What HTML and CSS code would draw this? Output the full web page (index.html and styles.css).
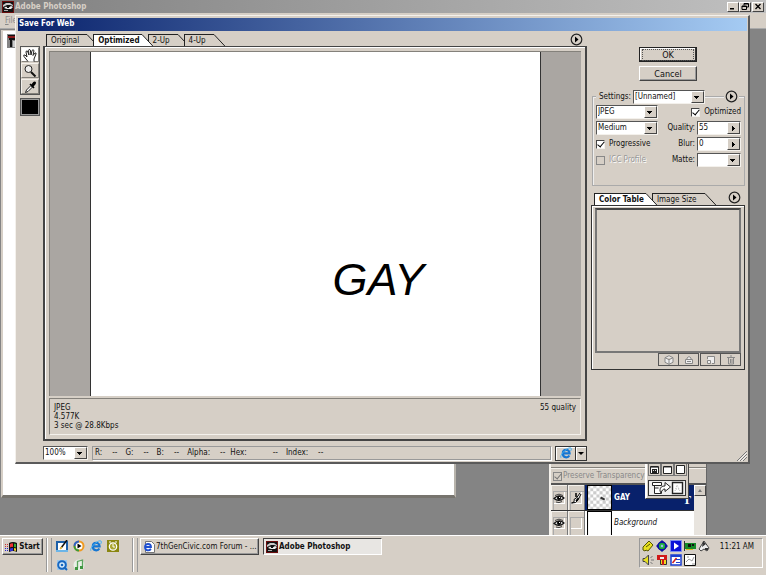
FILE: index.html
```html
<!DOCTYPE html>
<html lang="en">
<head>
<meta charset="utf-8">
<title>Adobe Photoshop</title>
<link rel="stylesheet" href="styles.css">
</head>
<body>
<svg class="defs" aria-hidden="true">
  <symbol id="ps" viewBox="0 0 12 12"><path fill="#6b0d0d" d="M0 0h12v12H0z"/><path fill="#111" d="M1 1h10v10H1z"/><path fill="#c9c9c9" d="M1 4l3-2 4 0 3 2v1L8 4H5L1 6z"/><path fill="#eee" d="M2 7l2-1.500 2 1.500 3-2 2 1-2 2H5z"/><path fill="#aaa" d="M2 9h4v1H2z"/><path fill="#111" d="M5 5.500h2v1.500H5z"/></symbol>
  <symbol id="ie" viewBox="0 0 12 12"><path fill="none" stroke="#1676d2" stroke-width="2.200" d="M2.800 6.400h6.800C9.600 1.600 2.800 1.900 2.800 6.500c0 4.300 4.900 4.800 6.500 2"/><path fill="none" stroke="#48b2f4" d="M1 10.800C-1 9 6 1 10 .8c2 0 1.500 2 .6 3.200"/></symbol>
  <symbol id="menu" viewBox="0 0 13 13"><circle cx="6.500" cy="6.500" r="5.300" fill="#d6cfc6" stroke="#222" stroke-width="1.200"/><path d="M5 3.500v6l3.500-3z"/></symbol>
  <symbol id="slant" viewBox="0 0 11 12"><path class="slant-fill" d="M0 .5l11 11.500H0z"/><path fill="none" stroke="#222" d="M0 .5l10.800 11.500"/></symbol>
  <symbol id="eye" viewBox="0 0 12 12"><path fill="#ddd" stroke="#111" stroke-width="1.200" d="M1 6.500Q6 1.500 11 6Q6 10.500 1 6.500z"/><path fill="none" stroke="#444" d="M2 3.500Q6 .8 10 3.500M3 10q3 1.500 6-.5"/><circle cx="6" cy="6" r="2"/><path fill="#fff" d="M6 5h1v1H6z"/></symbol>
</svg>

<main class="app">
  <header class="app-title"><svg class="i12"><use href="#ps"/></svg><h1>Adobe Photoshop</h1>
    <div class="winbtns">
      <button aria-label="Minimize"><svg viewBox="0 0 8 7"><path d="M1 5h4v1.500H1z"/></svg></button><button aria-label="Restore"><svg viewBox="0 0 8 7"><path fill="none" stroke="#000" d="M3 2.500V.5h4.500v3.500H6M1 3h4.500v3.500H1zM3 1h4M1 3.500h4"/></svg></button><button class="close" aria-label="Close"><svg viewBox="0 0 8 7"><path stroke="#000" stroke-width="1.300" d="M1.500 1l5 5M6.500 1l-5 5"/></svg></button>
    </div>
  </header>
  <nav class="menubar"><a href="#"><u>F</u>ile</a></nav>

  <section class="document" aria-label="Document"><svg class="doc-icon" viewBox="0 0 12 14"><path fill="#848484" d="M0 0h12v14H0z"/><path fill="#8b1a1a" d="M1 2h11v2H1z"/><path fill="#111" d="M1 1h9v1H1zM2 4h10v2H2zM3 6h2v7H3z"/><path fill="#ccc" d="M6 7h6v6H6z"/></svg></section>

  <section class="palette" aria-label="Layers">
    <div class="palette-top"></div>
    <label class="preserve"><input type="checkbox" checked disabled>Preserve Transparency</label>
    <div class="layers">
      <div class="list">
        <div class="layer selected"><span class="cell"><svg class="i12"><use href="#eye"/></svg></span><span class="cell"><svg class="i12" viewBox="0 0 12 12"><path fill="#fff" stroke="#000" d="M10 1L6.500 6 4 7.500q1 3-2.500 3.500 5 .5 6.500-3l3-6"/><path stroke="#000" stroke-width="1.500" d="M6 1v4M8.500 6L6 9"/></svg></span>
          <svg class="thumb" viewBox="0 0 24 24"><defs><pattern id="chk" width="6" height="6" patternUnits="userSpaceOnUse"><path fill="#fff" d="M0 0h6v6H0z"/><path fill="#ccc" d="M0 0h3v3H0zM3 3h3v3H3z"/></pattern></defs><path fill="url(#chk)" stroke="#000" d="M.5.5h23v23H.5z"/><path stroke="#333" stroke-width="2" d="M13 12l4 2"/></svg><b>GAY</b><span class="type">T</span></div>
        <div class="layer"><span class="cell"><svg class="i12"><use href="#eye"/></svg></span><span class="cell"></span>
          <svg class="thumb" viewBox="0 0 24 24"><path fill="#fff" stroke="#000" d="M.5.5h23v30H.5z"/></svg><i>Background</i></div>
      </div>
      <div class="scroll"><button aria-label="Scroll up"></button></div>
    </div>
  </section>

  <section class="toolbox" aria-label="Toolbox">
    <div class="modes"><button aria-label="Standard screen"><svg viewBox="0 0 11 11"><path fill="#fff" stroke="#222" d="M1.500 2.500h8v7h-8z"/><path fill="#777" d="M2 3h7v1H2z"/><path fill="#222" d="M3 5h5v4H3z"/><path fill="#ddd" d="M4 6h1v1H4zM6 6h1v1H6z"/></svg></button><button aria-label="Full screen with menu"><svg viewBox="0 0 11 11"><path fill="#fff" stroke="#222" d="M1.500 2.500h8v7h-8z"/><path fill="#999" d="M2 3h7v1H2z"/></svg></button><button aria-label="Full screen"><svg viewBox="0 0 11 11"><path fill="#fff" stroke="#222" d="M1.500 1.500h8v8h-8z"/></svg></button></div>
    <button class="jump" aria-label="Jump to ImageReady"><svg viewBox="0 0 34 14"><path fill="#fff" stroke="#222" d="M2.500 1.500h9v3h-9zM4.500 4.500v8h7v-2M4.500 7h4M10 10c0-4 2-5 5-5V1.500L20.500 6 15 10.500V8c-2 0-3 1-4 4z"/><path fill="#fff" stroke="#222" stroke-width="1.400" d="M22.500 1.500h10v11h-10z"/><path fill="none" stroke="#bbb" stroke-dasharray="1 1" d="M25 10l2-6 3 6M26 8h3"/></svg></button>
  </section>

  <section class="dialog" role="dialog" aria-labelledby="dlg">
    <h2 id="dlg">Save For Web</h2>
    <div class="dialog-body">
      <aside class="tools">
        <div class="toolgroup">
          <button class="on" aria-label="Hand"><svg viewBox="0 0 16 14"><path fill="#fff" stroke="#222" d="M6 13.500L2 8.500q-1-2 1-1.500l2 2L4 4q0-1.500 1.500-1L7 7 6.500 2.500Q7 .5 8.300 2L9 7l1-4.500q1-1.500 2 0L11 7.500 13 5q1.500-.5 1 1l-2 5v2.500"/></svg></button>
          <button aria-label="Zoom"><svg viewBox="0 0 16 14"><circle cx="6.500" cy="5" r="3.500" fill="#eee" stroke="#222"/><path stroke="#111" stroke-width="2" d="M9 8l4.500 4.500"/></svg></button>
          <button aria-label="Eyedropper"><svg viewBox="0 0 16 14"><path fill="#fff" stroke="#222" d="M9 5.500L4.500 10l-1 2.500L6 11.500 10.500 7"/><path stroke="#000" stroke-width="1.600" d="M8 4l4 4"/><path stroke="#000" stroke-width="3" stroke-linecap="round" d="M10.500 5.500l2-2.500"/></svg></button>
        </div>
        <button class="swatch" aria-label="Eyedropper color"></button>
      </aside>

      <div class="preview">
        <div class="tabrow">
          <div class="tabs" role="tablist">
            <button class="tab" role="tab"><span>Original</span><svg><use href="#slant"/></svg></button>
            <button class="tab active" role="tab" aria-selected="true"><span>Optimized</span><svg><use href="#slant"/></svg></button>
            <button class="tab" role="tab"><span>2-Up</span><svg><use href="#slant"/></svg></button>
            <button class="tab" role="tab"><span>4-Up</span><svg><use href="#slant"/></svg></button>
          </div>
          <button class="round" aria-label="Preview menu"><svg><use href="#menu"/></svg></button>
        </div>
        <div class="frame">
          <div class="stage"><div class="canvas"><p>GAY</p></div></div>
          <div class="info"><p>JPEG<br>4.577K<br>3 sec @ 28.8Kbps</p><p>55 quality</p></div>
        </div>
        <div class="status">
          <span class="select zoom"><select aria-label="Zoom level"><option>100%</option></select></span>
          <dl class="readout">
            <div><dt>R:</dt><dd>--</dd></div><div><dt>G:</dt><dd>--</dd></div><div><dt>B:</dt><dd>--</dd></div><div><dt>Alpha:</dt><dd>--</dd></div><div class="hex"><dt>Hex:</dt><dd>--</dd></div><div><dt>Index:</dt><dd>--</dd></div>
          </dl>
          <div class="browser"><button aria-label="Preview in browser"><svg class="i12"><use href="#ie"/></svg></button><button class="more" aria-label="Select browser"></button></div>
        </div>
      </div>

      <aside class="side">
        <div class="actions"><button class="ok"><span>OK</span></button><button>Cancel</button></div>
        <div class="settings">
          <div class="legend"><label for="set">Settings:</label><span class="select"><select id="set"><option>[Unnamed]</option></select></span><hr><button class="round" aria-label="Settings menu"><svg><use href="#menu"/></svg></button></div>
          <div class="fields">
            <span class="select"><select aria-label="Format"><option>JPEG</option></select></span>
            <label class="check right"><input type="checkbox" checked>Optimized</label>
            <span class="select"><select aria-label="Compression quality"><option>Medium</option></select></span>
            <div class="field"><label for="q">Quality:</label><span class="select spin"><input id="q" type="text" value="55"></span></div>
            <label class="check"><input type="checkbox" checked>Progressive</label>
            <div class="field"><label for="b">Blur:</label><span class="select spin"><input id="b" type="text" value="0"></span></div>
            <label class="check off"><input type="checkbox" disabled>ICC Profile</label>
            <div class="field"><label for="m">Matte:</label><span class="select"><select id="m"><option></option></select></span></div>
          </div>
        </div>
        <div class="colors">
          <div class="tabrow">
            <div class="tabs" role="tablist">
              <button class="tab active" role="tab" aria-selected="true"><span>Color Table</span><svg><use href="#slant"/></svg></button>
              <button class="tab" role="tab"><span>Image Size</span><svg><use href="#slant"/></svg></button>
            </div>
            <button class="round" aria-label="Color table menu"><svg><use href="#menu"/></svg></button>
          </div>
          <div class="table-frame">
            <div class="swatches"></div>
            <div class="table-buttons">
              <button aria-label="Web shift" disabled><svg viewBox="0 0 10 10"><path fill="#eee" stroke="#888" d="M5 .7l4 2v4.600l-4 2-4-2V2.700zM1 2.700l4 2 4-2M5 4.700v4.600"/></svg></button><button aria-label="Lock" disabled><svg viewBox="0 0 10 10"><path fill="#eee" stroke="#888" d="M1.500 4.500h7v4h-7zM3 4.500V3q2-3 4 0v1.500M3 6.500h4"/></svg></button><button class="gap" aria-label="New color" disabled><svg viewBox="0 0 10 10"><path fill="#eee" stroke="#888" d="M1.500 4V1.500h7v7H6M1.500 5.500h3v3h-3z"/></svg></button><button aria-label="Delete" disabled><svg viewBox="0 0 10 10"><path fill="none" stroke="#888" d="M1 2.500h8M4 1h2M2.500 3v6h5V3M4.500 4v4M6 4v4"/></svg></button>
            </div>
          </div>
        </div>
      </aside>
    </div>
    <svg class="grip" viewBox="0 0 10 10"><path stroke="#777" d="M0 10L10 0M3 10l7-7M6 10l4-4"/><path stroke="#fff" d="M1.500 10L10 1.500M4.500 10L10 4.500"/></svg>
  </section>
</main>

<footer class="taskbar">
  <button class="start"><svg viewBox="0 0 13 12"><path fill="#111" d="M4 2q4-2 8 0v9q-4-2-8 0z"/><path fill="#e33" d="M5 3q1.500-1 3-.6V6q-1.500-.4-3 .4z"/><path fill="#3a3" d="M9 2.500q1 0 2 .5v3.500L9 6z"/><path fill="#33d" d="M5 7.500q1.500-.8 3-.5v3q-1.500-.4-3 .4z"/><path fill="#ec2" d="M9 7l2 .5V10l-2-.5z"/><path stroke="#c33" stroke-dasharray="1 1" d="M0 3.500h4M0 5.500h4"/><path stroke="#22c" stroke-dasharray="1 1" d="M0 7.500h4M0 9.500h4"/></svg>Start</button>
  <div class="quick">
    <a href="#" aria-label="Show desktop"><svg class="i12" viewBox="0 0 12 12"><path fill="#1c5fa8" d="M0 1h12v11H0z"/><path fill="#fff" d="M2 3h8v7H2z"/><path fill="#6cb5e8" d="M0 10h12v2H0z"/><path stroke="#111" stroke-width="1.500" d="M5 8l6-8"/><path stroke="#e7b52c" stroke-width="1.500" d="M4 9l2-2"/></svg></a>
    <a href="#" aria-label="Media Player"><svg class="i12" viewBox="0 0 12 12"><circle cx="6" cy="6" r="4.500" fill="#fff" stroke="#f09a20" stroke-width="2"/><path fill="none" stroke="#2b62c8" stroke-width="2" d="M1.500 6A4.500 4.500 0 0 1 6 1.500"/><path fill="none" stroke="#3a9a3a" stroke-width="2" d="M1.500 6A4.500 4.500 0 0 0 6 10.500"/><path d="M4.500 3.500v5l4-2.500z"/></svg></a>
    <a href="#" aria-label="Internet Explorer"><svg class="i12"><use href="#ie"/></svg></a>
    <a href="#" aria-label="Outlook"><svg class="i12" viewBox="0 0 12 12"><path fill="#8a8610" d="M0 0h12v12H0z"/><circle cx="6" cy="6.500" r="3.700" fill="#aaa630" stroke="#fff" stroke-width="1.200"/><path fill="none" stroke="#fff" d="M6 4v3h2M2 2h2M8 2h2"/></svg></a>
    <a href="#" aria-label="QuickTime"><svg class="i12" viewBox="0 0 12 12"><path fill="#9cc8ee" d="M1 1h10v10H1z"/><circle cx="6" cy="6" r="3.800" fill="#d8ecfa" stroke="#1767c0" stroke-width="2"/><circle cx="6" cy="6" r="1.300" fill="#1767c0"/><path stroke="#1767c0" stroke-width="2" d="M8 8l3 3"/></svg></a>
    <a href="#" aria-label="iTunes"><svg class="i12" viewBox="0 0 12 12"><circle cx="6" cy="6" r="5.500" fill="#e8efe6"/><path fill="none" stroke="#5aa45c" stroke-width="1.300" d="M4.500 9V2.500L9.500 1v7"/><path fill="#3e9640" d="M2 8h3v3H2zM7 7h3v3H7z"/></svg></a>
  </div>
  <div class="tasks">
    <button class="task"><svg class="i12" viewBox="0 0 12 12"><path fill="#fff" stroke="#777" d="M2.500.5h6l3 3v8h-9z"/><path fill="none" stroke="#1f4fd0" stroke-width="1.800" d="M2 6h6C8 2 2 2 2 6s4 4 6 2"/></svg><span>7thGenCivic.com Forum - ...</span></button>
    <button class="task active"><svg class="i12"><use href="#ps"/></svg><span>Adobe Photoshop</span></button>
  </div>
  <div class="tray">
    <div class="tray-icons">
      <svg viewBox="0 0 12 12"><path fill="#e8e020" stroke="#555500" d="M1 7l6-6 4 4-5 6-2-1-1 1-2-1z"/><path stroke="#555500" d="M4 7l4-3"/></svg>
      <svg viewBox="0 0 12 12"><circle cx="6" cy="6" r="4" fill="#18a038" stroke="#1010a0" stroke-width="1.500"/><path fill="#1010a0" d="M6 0l3 3H3zM12 6L9 9V3zM6 12L3 9h6zM0 6l3-3v6z"/><circle cx="6" cy="6" r="2.500" fill="#28b048"/><circle cx="6" cy="6" r="1.200" fill="#9be"/></svg>
      <svg viewBox="0 0 12 12"><path fill="#0a12d8" stroke="#7c8cf0" d="M.5.5h11v11H.5z"/><path fill="#fff" d="M4 2.500v7L9 6z"/></svg>
      <svg viewBox="0 0 12 12"><path fill="#158a28" d="M1 3h11v6H1z"/><path fill="#111" d="M4 4h3v3H4zM8 4h2v2H8z"/><path fill="#d8b820" d="M2 9h7v1H2z"/><path stroke="#333" d="M.5 1v10"/></svg>
      <svg viewBox="0 0 12 12"><path fill="#eee" stroke="#444" d="M1 9l5-8 5 7-2 3-3-2-3 2z"/><path fill="#333" d="M5 1l3 3-4 3zM7 8h3v2H7z"/></svg>
      <svg viewBox="0 0 12 12"><path fill="#e8e020" stroke="#444" d="M1 4.500h2L6.500 1v10L3 7.500H1z"/><path stroke="#777" d="M8.500 4l2-2M9 6h3M8.500 8l2 2"/></svg>
      <svg viewBox="0 0 12 12"><path fill="#f0d820" stroke="#333" d="M4.500 5.500h6v5h-6z"/><path fill="#d01818" d="M1 1h10v5H1zM6 6h2v5H6z"/><path fill="#eee" d="M4 3h4v2H4z"/></svg>
      <svg viewBox="0 0 12 12"><path fill="#fff" stroke="#1c3fd0" stroke-width="1.500" d="M1 1h10v10H1z"/><path fill="#1c3fd0" d="M1 1h10v2H1z"/><path stroke="#d02020" stroke-width="1.500" d="M2.500 9l4-5"/><path stroke="#1c3fd0" d="M6 5.500h4M6 8.500h4"/></svg>
      <svg viewBox="0 0 12 12"><path fill="#fff" stroke="#111" d="M.5.5h11v11H.5z"/><path fill="none" stroke="#999" d="M2 8l3-3 3 2 2-4M8 10h3M3 3h2"/></svg>
    </div>
    <time>11:21 AM</time>
  </div>
</footer>
</body>
</html>
```

FILE: styles.css
```css
:root {
  --face: #d6cfc6;
  --light: #f4f1ec;
  --shade: #84817b;
  --dark: #333;
  --desk: #848484;
}
* { box-sizing: border-box; }
html, body { height: 100%; margin: 0; }
body {
  display: flex;
  flex-direction: column;
  font: 8px/10px "DejaVu Sans Condensed", "DejaVu Sans", sans-serif;
  color: #111;
  background: var(--face);
  overflow: hidden;
}
button, input, select { font: inherit; color: inherit; margin: 0; padding: 0; border-radius: 0; }
button { background: var(--face); border: 1px solid var(--dark); display: flex; align-items: center; justify-content: center; }
h1, h2, p, dl, dd { margin: 0; font-size: inherit; }
svg { display: block; flex: none; }
.defs { position: absolute; width: 0; height: 0; }
.i12 { width: 12px; height: 12px; }

/* application frame */
.app { flex: 1; position: relative; background: var(--desk); overflow: hidden; }
.app-title { display: flex; align-items: center; gap: 1px; height: 13px; padding: 0 2px; background: linear-gradient(90deg, #808080, #c0c0c0); color: var(--face); }
.winbtns { display: flex; margin-left: auto; }
.winbtns button { width: 12px; height: 10px; border-color: #fff #444 #444 #fff; }
.winbtns svg { width: 8px; height: 7px; }
.winbtns .close { margin-left: 1px; }
.menubar { height: 16px; padding: 3px 5px; background: var(--face); border-bottom: 1px solid #aaa; }
.menubar a { color: #888; text-decoration: none; }

.document { position: absolute; left: 1px; top: 30px; bottom: 37px; width: 455px; padding: 3px 4px; background: #fff; border: solid; border-width: 1px 2px 3px 2px; border-color: var(--face) #b8b4ac #77746e var(--face); }
.doc-icon { width: 12px; height: 14px; }

/* layers palette */
.palette { position: absolute; right: 59px; bottom: 0; width: 158px; background: var(--face); border-left: 2px solid var(--light); border-right: 1px solid #666; }
.palette-top { height: 16px; border-bottom: 1px solid var(--shade); }
.preserve { display: flex; align-items: center; gap: 1px; height: 15px; padding-left: 2px; color: #888; border-top: 1px solid var(--light); }
.layers { display: flex; border-top: 2px solid #555; }
.list { flex: 1; background: #fff; }
.layer { display: flex; align-items: center; height: 26px; border-bottom: 1px solid #333; overflow: hidden; }
.layer.selected { background: #08216b; color: #fff; }
.layer:last-child { border: 0; height: 24px; }
.cell { align-self: stretch; display: grid; place-items: center; width: 17px; background: var(--face); border-right: 1px solid #777; box-shadow: inset 1px 1px var(--light), inset 2px 6px var(--face), inset 3px 7px #aaa, inset -2px -6px var(--face), inset -3px -7px #fff; }
.thumb { width: 25px; height: 25px; margin: 0 2px; }
.layer .type { margin: 4px 3px 0 auto; font-family: "Liberation Serif", serif; font-weight: bold; font-size: 12px; }
.scroll { width: 12px; background: #e8e4de; }
.scroll button { width: 12px; height: 11px; border-color: #fff #444 #444 #fff; }
.scroll button::after { content: ""; border: 2px solid transparent; border-top: 0; border-bottom: 3px solid #777; }

.toolbox { position: absolute; right: 77px; bottom: 36px; width: 44px; padding: 2px; background: var(--face); border: 1px solid #444; border-left-color: #fff; box-shadow: inset 1px 0 #fff; }
.modes { display: flex; justify-content: space-between; margin-bottom: 4px; }
.modes button { width: 13px; height: 13px; border-color: #777; }
.modes svg { width: 11px; height: 11px; }
.jump { width: 100%; height: 16px; background: #eee; }
.jump svg { width: 34px; height: 14px; }

/* dialog */
.dialog { position: absolute; left: 15px; top: 15px; right: 16px; bottom: 71px; padding: 2px 1px 1px 2px; display: flex; flex-direction: column; background: var(--face); border: solid; border-width: 1px 2px 2px 1px; border-color: var(--light) #5a5a5a #5a5a5a var(--light); }
.dialog h2 { padding: 1px; height: 13px; color: #fff; background: linear-gradient(90deg, #08216b, #a5cbf3); }
.dialog-body { flex: 1; display: flex; min-height: 0; padding: 2px 2px 0 2px; }
.grip { position: absolute; right: 1px; bottom: 1px; width: 10px; height: 10px; }

.tools { width: 23px; padding-top: 13px; flex: none; }
.toolgroup { width: 20px; border: 1px solid #555; }
.tools button { width: 18px; height: 15px; border: 1px solid; border-color: var(--light) var(--shade) var(--shade) var(--light); }
.tools svg { width: 16px; height: 14px; }
.toolgroup .on { background: #fff; }
.toolgroup button + button { margin-top: 1px; }
.tools .swatch { width: 20px; height: 18px; margin-top: 3px; background: #000; border: 1px solid #555; outline: 1px solid #999; outline-offset: -2px; }

.preview { flex: 1; min-width: 0; display: flex; flex-direction: column; }
.tabrow { display: flex; justify-content: space-between; align-items: flex-end; padding: 0 4px 0 3px; }
.tabs { display: flex; isolation: isolate; }
.tab { border: 0; background: none; align-items: stretch; height: 12px; position: relative; z-index: 0; }
.tab span { background: var(--face); border: 1px solid #222; border-width: 1px 0 0 1px; padding: 1px 8px 0 4px; white-space: nowrap; }
.tab svg { width: 11px; height: 12px; }
.slant-fill { fill: var(--slant, #d6cfc6); }
.tab + .tab { margin-left: -5px; }
.tab.active { z-index: 1; font-weight: bold; --slant: #fff; }
.tab.active span { background: #fff; padding-right: 2px; }
.round { border: 0; background: none; width: 13px; height: 13px; }
.round svg { width: 13px; height: 13px; }

.frame { flex: 1; display: flex; flex-direction: column; padding: 4px; border: 2px solid #444; border-top-width: 1px; box-shadow: inset 1px 1px #fff; }
.stage { flex: 1; display: flex; justify-content: center; background: #aaa6a2; border: 1px solid #84817b; border-width: 1px 0 0 1px; }
.canvas { width: 85%; background: #fff; border: solid #333; border-width: 0 1px; display: flex; align-items: flex-end; justify-content: flex-end; padding: 0 116px 90px 0; }
.canvas p { font: italic 45px/52px "Liberation Sans", Arial, sans-serif; color: #000; }
.info { display: flex; justify-content: space-between; margin-top: 2px; padding: 4px; line-height: 9px; border: 1px solid; border-color: #84817b var(--light) var(--light) #84817b; }

.status { display: flex; align-items: center; gap: 4px; margin-top: 4px; height: 16px; }
.zoom { width: 45px; }
.readout { flex: 1; display: flex; gap: 8px; height: 14px; padding: 1px 2px; border: 1px solid #999; box-shadow: 1px 1px #fff; }
.readout div { display: flex; gap: 10px; }
.readout .hex { margin-left: -3px; }
.readout .hex dd { margin-left: 16px; }
.browser { display: flex; }
.browser button { width: 21px; height: 15px; box-shadow: inset 1px 1px #fff; }
.browser .more { width: 12px; margin-left: -1px; }
.more::after { content: ""; border: 3px solid transparent; border-top-color: #000; border-bottom: 0; }

/* form controls */
.select { display: flex; height: 14px; border: 1px solid; border-color: #555 var(--light) var(--light) #555; background: #fff; position: relative; }
.select select, .select input { appearance: none; flex: 1; min-width: 0; width: 100%; border: 0; background: none; outline: 0; padding-left: 1px; }
.select::after {
  content: "";
  position: absolute; right: 0; top: 0; bottom: 0; width: 11px; pointer-events: none;
  border: 1px solid; border-color: #fff #444 #444 #fff;
  background: linear-gradient(#000, #000) 2px 4px / 5px 1px no-repeat, linear-gradient(#000, #000) 3px 5px / 3px 1px no-repeat, linear-gradient(#000, #000) 4px 6px / 1px 1px no-repeat, var(--face);
}
.spin::after { background: linear-gradient(#000, #000) 4px 3px / 1px 5px no-repeat, linear-gradient(#000, #000) 5px 4px / 1px 3px no-repeat, linear-gradient(#000, #000) 6px 5px / 1px 1px no-repeat, var(--face); }
input[type="checkbox"] { appearance: none; width: 9px; height: 9px; background: #fff; border: 1px solid; border-color: #444 var(--light) var(--light) #444; }
input[type="checkbox"]:checked::after { content: ""; display: block; width: 3px; height: 6px; margin: -1px 0 0 2px; border: solid #000; border-width: 0 1px 1px 0; transform: rotate(40deg); }
input[type="checkbox"]:disabled { background: var(--face); border-color: #888; }
input[type="checkbox"]:disabled::after { border-color: #777; }

/* right column */
.side { width: 154px; margin-left: 4px; flex: none; display: flex; flex-direction: column; }
.actions { display: flex; flex-direction: column; align-items: center; gap: 4px; padding-top: 14px; }
.actions button { width: 58px; height: 15px; font-size: 9px; border-color: #fff #444 #444 #fff; box-shadow: inset -1px -1px #999; }
.actions .ok { border: 1px solid #222; box-shadow: inset -1px -1px #333, inset 1px 1px #fff; }
.ok span { width: 52px; border: 1px dotted #555; }
.settings { margin: 15px 0 0 1px; height: 90px; border: 1px solid #aaa; box-shadow: inset 1px 1px #eee; padding: 0 3px; }
.legend { display: flex; align-items: center; margin-top: -8px; height: 15px; }
.legend label { background: var(--face); padding: 0 2px 0 3px; }
.legend .select { width: 72px; }
.legend hr { flex: 1; border: 0; margin: 0; }
.legend .round { background: var(--face); width: 15px; margin-right: 2px; }
.fields { display: grid; grid-template-columns: 62px 1fr; align-items: center; row-gap: 2px; margin-top: 1px; }
.check { display: flex; align-items: center; gap: 4px; white-space: nowrap; }
.check.right { justify-content: flex-end; }
.check.off { color: #999; text-shadow: 1px 1px #fff; }
.field { display: flex; align-items: center; justify-content: flex-end; gap: 2px; }
.field .select { width: 44px; }

.colors { margin-top: 5px; }
.colors .round { margin-bottom: 1px; }
.table-frame { height: 165px; display: flex; flex-direction: column; padding: 2px 3px 3px; border: 1px solid #333; box-shadow: inset 1px 1px #fff; }
.swatches { flex: 1; border: 2px solid #777; border-top-color: #444; }
.table-buttons { display: flex; justify-content: flex-end; }
.table-buttons button { width: 21px; height: 13px; margin-left: -1px; border-color: #555; }
.table-buttons .gap { margin-left: 1px; }
.table-buttons svg { width: 10px; height: 10px; }

/* taskbar */
.taskbar { flex: none; display: flex; align-items: flex-start; height: 40px; padding: 2px 3px 0 2px; background: var(--face); border-top: 1px solid #fff; }
.taskbar button { height: 17px; border-color: #fff #444 #444 #fff; box-shadow: inset -1px -1px #999; }
.start { width: 41px; gap: 1px; font-weight: bold; }
.start svg { width: 13px; height: 12px; }
.quick, .tasks { border-left: 1px solid #999; box-shadow: inset 1px 0 #fff, inset 4px 0 var(--face), inset 5px 0 #999; }
.quick { display: grid; grid-template-columns: repeat(4, 12px); gap: 5px; width: 86px; height: 34px; margin-left: 3px; padding: 2px 0 0 9px; }
.tasks { display: flex; gap: 4px; height: 34px; padding-left: 7px; }
.task { width: 119px; gap: 1px; white-space: nowrap; justify-content: flex-start; padding-left: 2px; }
.taskbar .task.active { font-weight: bold; background: #e8e6e3; border-color: #444 #fff #fff #444; box-shadow: none; }
.tray { display: flex; margin-left: auto; width: 124px; height: 30px; padding: 1px 2px; border: 1px solid; border-color: #999 #fff #fff #999; }
.tray-icons { display: grid; grid-template-columns: repeat(5, 12px); gap: 1px 2px; flex: 1; }
.tray-icons svg { width: 12px; height: 12px; }
.tray time { padding: 2px 6px 0 0; }
```
